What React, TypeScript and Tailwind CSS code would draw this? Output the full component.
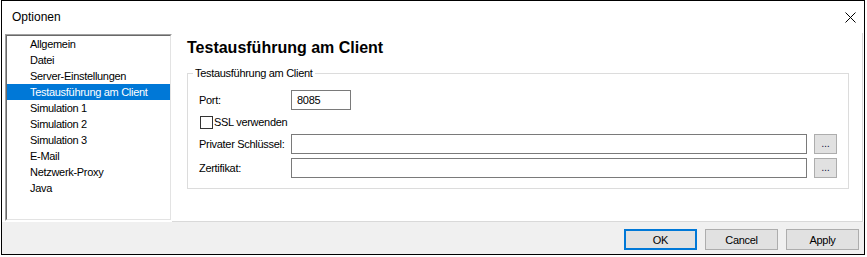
export default function App() {
  const items = [
    "Allgemein",
    "Datei",
    "Server-Einstellungen",
    "Testausführung am Client",
    "Simulation 1",
    "Simulation 2",
    "Simulation 3",
    "E-Mail",
    "Netzwerk-Proxy",
    "Java",
  ];
  const selected = 3;
  return (
    <div className="w-[867px] h-[257px] bg-white font-['Liberation_Sans',Arial,sans-serif] text-black pl-[1px]">
      <div className="w-[864px] h-[255px] border border-black flex flex-col bg-white">
        {/* Title bar */}
        <div className="h-[32px] shrink-0 flex items-center justify-between pl-[10px] pr-[8px] text-[12px]">
          <span className="leading-[14px]">Optionen</span>
          <svg width="11" height="11" viewBox="0 0 11 11" fill="none" stroke="#000" strokeWidth="1">
            <path d="M0.5 0.5 L10.5 10.5 M10.5 0.5 L0.5 10.5" />
          </svg>
        </div>

        {/* Body */}
        <div className="h-[189px] shrink-0 flex pl-[3px] pr-[1px] text-[11px] tracking-[-0.3px]">
          {/* List */}
          <div className="mt-[1px] h-[187px] w-[167px] shrink-0 border-t border-l border-t-[#a0a0a0] border-l-[#a0a0a0] border-r border-b border-r-white border-b-white">
            <div className="h-full w-full border-t border-l border-t-[#696969] border-l-[#696969] border-r border-b border-r-[#e3e3e3] border-b-[#e3e3e3] bg-white">
              {items.map((it, i) => (
                <div
                  key={it}
                  className={
                    i === selected
                      ? "h-[16px] leading-[16px] pl-[23px] bg-[#0078d7] text-white whitespace-nowrap"
                      : "h-[16px] leading-[16px] pl-[23px] text-black whitespace-nowrap"
                  }
                >
                  {it}
                </div>
              ))}
            </div>
          </div>

          {/* Right panel */}
          <div className="flex-1 h-full border-r border-b border-[#d9d9d9] pl-[15px] pr-[13px] pt-[5px]">
            <div className="text-[16px] font-bold leading-[20px] tracking-normal">Testausführung am Client</div>
            <fieldset className="mt-[8px] border border-[#dcdcdc] p-0 m-0">
              <legend className="ml-[5px] px-[2px] leading-[14px]">Testausführung am Client</legend>
              <div className="pl-[11px] pr-[11px] pt-[10px] pb-[10px] flex flex-col">
                <div className="flex items-center h-[20px]">
                  <span className="w-[92px] shrink-0">Port:</span>
                  <div className="w-[60px] h-[20px] border border-[#7a7a7a] bg-white pl-[5px] leading-[18px]">8085</div>
                </div>
                <div className="flex items-center h-[13px] mt-[6px] pl-[1px]">
                  <div className="w-[13px] h-[13px] border border-[#333333] bg-white shrink-0" />
                  <span className="ml-[1px] leading-[13px]">SSL verwenden</span>
                </div>
                <div className="flex items-center h-[20px] mt-[5px]">
                  <span className="w-[92px] shrink-0 whitespace-nowrap">Privater Schlüssel:</span>
                  <div className="flex-1 h-[20px] border border-[#7a7a7a] bg-white" />
                  <div className="ml-[7px] w-[23px] h-[20px] border border-[#adadad] bg-[#e1e1e1] flex items-center justify-center text-[#1a1a4a] leading-[14px] pb-[2px]">...</div>
                </div>
                <div className="flex items-center h-[20px] mt-[4px]">
                  <span className="w-[92px] shrink-0">Zertifikat:</span>
                  <div className="flex-1 h-[20px] border border-[#7a7a7a] bg-white" />
                  <div className="ml-[7px] w-[23px] h-[20px] border border-[#adadad] bg-[#e1e1e1] flex items-center justify-center text-[#1a1a4a] leading-[14px] pb-[2px]">...</div>
                </div>
              </div>
            </fieldset>
          </div>
        </div>

        {/* Button bar */}
        <div className="h-[32px] shrink-0 bg-[#f0f0f0] flex justify-end items-start pt-[7px] pr-[5px] gap-[8px] text-[11px] tracking-[-0.3px]">
          <div className="w-[73px] h-[21px] border-2 border-[#0078d7] bg-[#e1e1e1] flex items-center justify-center leading-[14px]">OK</div>
          <div className="w-[73px] h-[21px] border border-[#adadad] bg-[#e1e1e1] flex items-center justify-center leading-[14px]">Cancel</div>
          <div className="w-[73px] h-[21px] border border-[#adadad] bg-[#e1e1e1] flex items-center justify-center leading-[14px]">Apply</div>
        </div>
      </div>
    </div>
  );
}
